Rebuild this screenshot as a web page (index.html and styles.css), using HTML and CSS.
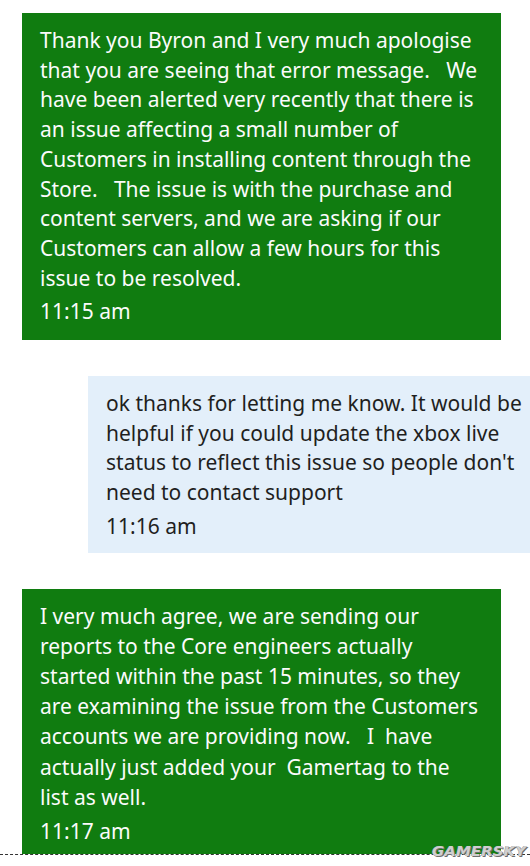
FILE: index.html
```
<!DOCTYPE html>
<html>
<head>
<meta charset="utf-8">
<link rel="stylesheet" href="styles.css">
</head>
<body>
<div class="chat">
  <div class="msg agent first">
    <p class="text">Thank you Byron and I very much apologise<br>that you are seeing that error message.&nbsp;&nbsp; We<br>have been alerted very recently that there is<br>an issue affecting a small number of<br>Customers in installing content through the<br>Store.&nbsp;&nbsp; The issue is with the purchase and<br>content servers, and we are asking if our<br>Customers can allow a few hours for this<br>issue to be resolved.</p>
    <p class="time">11:15 am</p>
  </div>
  <div class="msg user">
    <p class="text">ok thanks for letting me know. It would be<br>helpful if you could update the xbox live<br>status to reflect this issue so people don't<br>need to contact support</p>
    <p class="time">11:16 am</p>
  </div>
  <div class="msg agent last">
    <p class="text">I very much agree, we are sending our<br>reports to the Core engineers actually<br>started within the past 15 minutes, so they<br>are examining the issue from the Customers<br>accounts we are providing now.&nbsp;&nbsp; I&nbsp; have<br>actually just added your&nbsp; Gamertag to the<br>list as well.</p>
    <p class="time">11:17 am</p>
  </div>
</div>
<div class="divider">
  <div class="watermark">GAMERSKY</div>
</div>
</body>
</html>
```
FILE: styles.css
```
html {
  margin: 0;
  padding: 0;
  background: #ffffff;
}
body {
  margin: 0;
  padding: 0;
  width: 530px;
  height: 866px;
  overflow: hidden;
  font-family: "Noto Sans", "Open Sans", sans-serif;
  font-size: 21px;
  line-height: 29.7px;
}
.chat {
  display: flex;
  flex-direction: column;
  gap: 36px;
  padding-top: 13px;
}
.msg {
  box-sizing: border-box;
}
.msg p {
  margin: 0;
  white-space: nowrap;
}
.agent {
  background: #107c10;
  color: #fbfbfb;
  margin-left: 22px;
  width: 479px;
}
.first {
  padding: 13px 18px 13px 18px;
}
.first .time {
  margin-top: 4px;
}
.user {
  background: #e3effa;
  color: #1f1f1f;
  margin-left: 88px;
  width: 442px;
  padding: 13px 0 11px 18px;
}
.user .time {
  margin-top: 4px;
}
.last {
  line-height: 30.2px;
  padding: 12px 18px 8px 18px;
}
.last .time {
  margin-top: 4px;
}
.divider {
  position: relative;
  border-top: 1px dashed #333;
  width: 530px;
}
.watermark {
  position: absolute;
  right: 4px;
  top: -11px;
  font-family: "DejaVu Sans", sans-serif;
  font-weight: bold;
  font-style: italic;
  font-size: 15px;
  line-height: 16px;
  color: #cfcfcf;
  text-shadow: 1px 1px 0 #6e6e6e, -0.5px -0.5px 0 #9a9a9a;
  transform: scaleY(0.9);
}
```
